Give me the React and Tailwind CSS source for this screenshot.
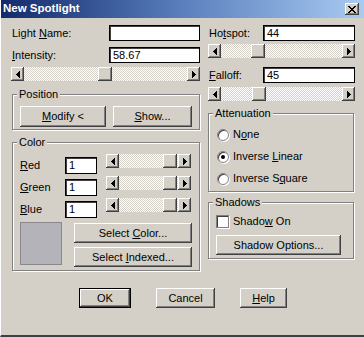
import React from "react";

const raised =
  "bg-[#d4d0c8] shadow-[inset_-1px_-1px_0_#404040,inset_1px_1px_0_#ffffff,inset_-2px_-2px_0_#808080,inset_2px_2px_0_#d4d0c8]";
const groupBox =
  "border border-[#808080] shadow-[inset_1px_1px_0_#ffffff,1px_1px_0_#ffffff] min-w-0";

const Arrow = ({ dir }) => (
  <svg width="4" height="7" viewBox="0 0 4 7" shapeRendering="crispEdges">
    {dir === "left" ? (
      <path d="M4 0V7H3.5L0 3.5Z" fill="#000" />
    ) : (
      <path d="M0 0V7H0.5L4 3.5Z" fill="#000" />
    )}
  </svg>
);

function ScrollBar({ pos, className = "" }) {
  return (
    <div className={`flex h-[14px] ${className}`}>
      <div className={`${raised} w-[13px] h-full flex items-center justify-center`}>
        <Arrow dir="left" />
      </div>
      <div className="flex flex-1 h-full bg-[image:repeating-conic-gradient(#d4d0c8_0_25%,#ffffff_0_50%)] bg-[length:2px_2px]">
        <div style={{ width: pos }} />
        <div className={`${raised} w-[14px] h-full`} />
      </div>
      <div className={`${raised} w-[13px] h-full flex items-center justify-center`}>
        <Arrow dir="right" />
      </div>
    </div>
  );
}

function Field({ label, value, labelW, className = "" }) {
  return (
    <div className={`flex items-center h-[16px] ${className}`}>
      <span className="pl-px" style={{ width: labelW }}>
        {label}
      </span>
      <div className="h-full flex-1 bg-white border border-black shadow-[inset_1px_1px_0_#404040] pl-[3px] leading-[14px]">
        {value}
      </div>
    </div>
  );
}

function Button({ children, className = "" }) {
  return (
    <div className={`${raised} flex items-center justify-center ${className}`}>{children}</div>
  );
}

function Radio({ checked, children }) {
  return (
    <div className="flex items-center h-[13px] gap-[4px]">
      <div className="w-[12px] h-[12px] rounded-full bg-white border border-[#808080] shadow-[inset_1px_1px_0_#404040,1px_1px_0_#ffffff] flex items-center justify-center">
        {checked && <div className="w-[4px] h-[4px] rounded-full bg-black" />}
      </div>
      <span>{children}</span>
    </div>
  );
}

function ColorRow({ label, className = "" }) {
  return (
    <div className={`flex items-start h-[17px] ${className}`}>
      <span className="w-[45px] leading-[17px]">{label}</span>
      <div className="w-[32px] h-full bg-white border border-black shadow-[inset_1px_1px_0_#404040] pl-[3px] leading-[15px]">
        1
      </div>
      <ScrollBar pos={44} className="w-[85px] ml-[9px] -mt-[3px]" />
    </div>
  );
}

export default function App() {
  return (
    <div className="w-[364px] h-[337px] bg-[#d4d0c8] flex flex-col border-l border-white border-b-2 border-b-[#404040] text-[11px] text-black font-['Liberation_Sans',Arial,sans-serif] overflow-hidden">
      {/* title bar */}
      <div className="h-[18px] flex items-center justify-between bg-linear-to-r from-[#14296a] via-[#5a7fbc] to-[#a9cbf2] pl-[3px] pr-[5px] -ml-px">
        <span className="text-white font-bold text-[11.5px]">New Spotlight</span>
        <div className={`${raised} w-[14px] h-[12px] flex items-center justify-center`}>
          <svg width="8" height="7" viewBox="0 0 8 7" shapeRendering="crispEdges">
            <path d="M0 0H2L4 2.5L6 0H8L5 3.5L8 7H6L4 4.5L2 7H0L3 3.5Z" fill="#000" />
          </svg>
        </div>
      </div>

      <div className="flex gap-[8px] pl-[10px] pt-[7px]">
        {/* left column */}
        <div className="w-[189px] flex flex-col">
          <Field label={<>Light <u>N</u>ame:</>} labelW={98} />
          <Field label={<><u>I</u>ntensity:</>} value="58.67" labelW={98} className="mt-[6px]" />
          <ScrollBar pos={74} className="mt-[4px]" />

          <fieldset className={`${groupBox} mt-[7px] ml-px px-[7px] pb-[2px]`}>
            <legend className="-ml-[3px] px-[2px] bg-[#d4d0c8] leading-[13px]">Position</legend>
            <div className="flex gap-[7px] mt-[5px]">
              <Button className="w-[87px] h-[21px]">
                <span><u>M</u>odify &lt;</span>
              </Button>
              <Button className="w-[80px] h-[21px]">
                <span><u>S</u>how...</span>
              </Button>
            </div>
          </fieldset>

          <fieldset className={`${groupBox} mt-[6px] ml-px px-[7px] pb-[3px]`}>
            <legend className="-ml-[3px] px-[2px] bg-[#d4d0c8] leading-[13px]">Color</legend>
            <ColorRow label={<><u>R</u>ed</>} className="mt-[8px]" />
            <ColorRow label={<><u>G</u>reen</>} className="mt-[5px]" />
            <ColorRow label={<><u>B</u>lue</>} className="mt-[5px]" />
            <div className="flex mt-[4px]">
              <div className="w-[43px] h-[43px] bg-[#b5b3ba] border border-[#8a888e]" />
              <div className="flex flex-col gap-[4px] ml-[12px] mt-px">
                <Button className="w-[118px] h-[20px]">
                  <span>Select <u>C</u>olor...</span>
                </Button>
                <Button className="w-[118px] h-[20px]">
                  <span>Select <u>I</u>ndexed...</span>
                </Button>
              </div>
            </div>
          </fieldset>
        </div>

        {/* right column */}
        <div className="w-[147px] flex flex-col">
          <Field label={<>Ho<u>t</u>spot:</>} value="44" labelW={55} />
          <ScrollBar pos={30} className="mt-[3px]" />
          <Field label={<><u>F</u>alloff:</>} value="45" labelW={55} className="mt-[9px]" />
          <ScrollBar pos={31} className="mt-[4px]" />

          <fieldset className={`${groupBox} mt-[6px] mr-px pl-[8px] pb-[6px]`}>
            <legend className="-ml-[4px] px-[2px] bg-[#d4d0c8] leading-[13px]">Attenuation</legend>
            <div className="flex flex-col gap-[9px] mt-[8px]">
              <Radio>N<u>o</u>ne</Radio>
              <Radio checked>Inverse <u>L</u>inear</Radio>
              <Radio>Inverse S<u>q</u>uare</Radio>
            </div>
          </fieldset>

          <fieldset className={`${groupBox} mt-[4px] mr-px pl-[7px] pb-[3px]`}>
            <legend className="-ml-[3px] px-[2px] bg-[#d4d0c8] leading-[13px]">Shadows</legend>
            <div className="flex items-center gap-[4px] h-[13px] mt-[6px]">
              <div className="w-[13px] h-[13px] bg-white border border-[#808080] shadow-[inset_1px_1px_0_#404040,1px_1px_0_#ffffff]" />
              <span>Shado<u>w</u> On</span>
            </div>
            <Button className="w-[125px] h-[20px] mt-[7px]">
              <span>Shadow Options...</span>
            </Button>
          </fieldset>
        </div>
      </div>

      {/* bottom buttons */}
      <div className="flex justify-center gap-[25px] mt-[17px] pl-px">
        <div className="w-[52px] h-[20px] border border-black flex">
          <Button className="flex-1">
            <span>OK</span>
          </Button>
        </div>
        <Button className="w-[59px] h-[20px]">
          <span>Cancel</span>
        </Button>
        <Button className="w-[47px] h-[20px]">
          <span><u>H</u>elp</span>
        </Button>
      </div>
    </div>
  );
}
